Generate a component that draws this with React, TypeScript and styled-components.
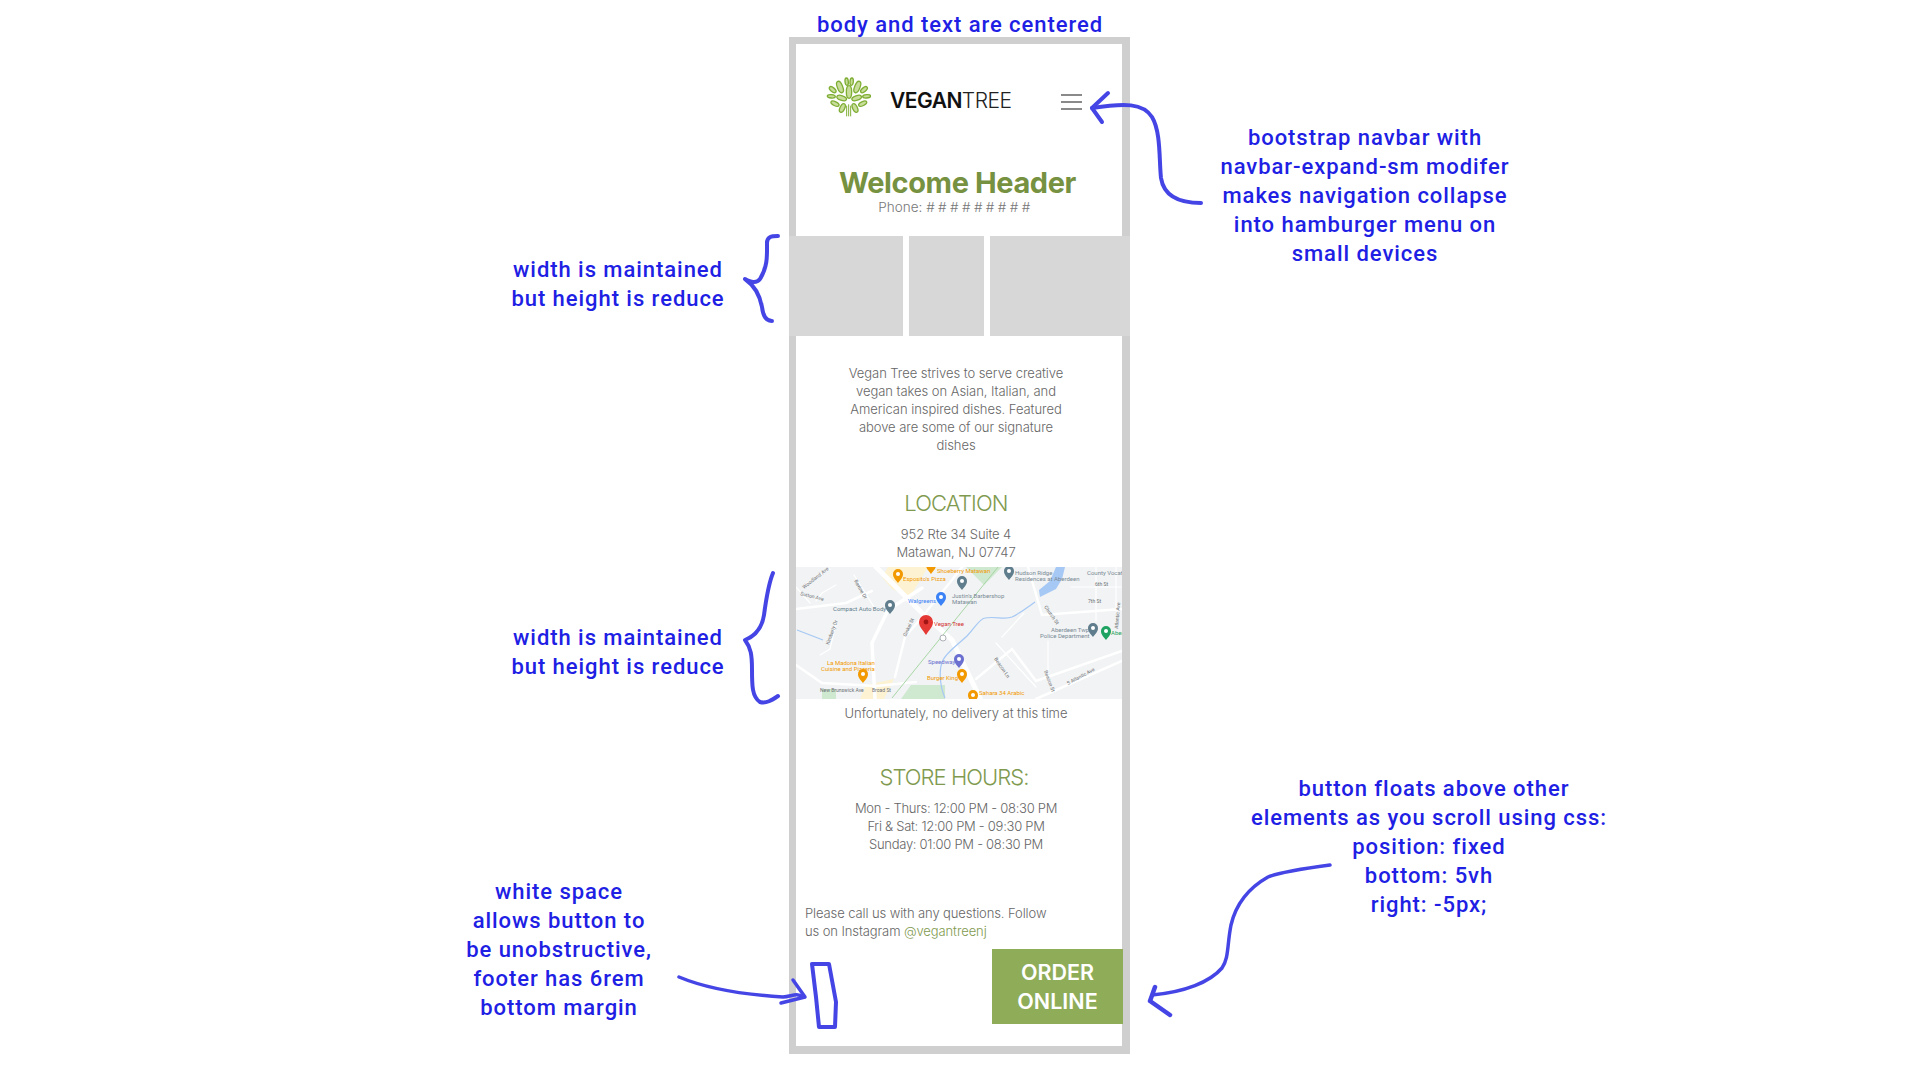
import styled, { createGlobalStyle } from "styled-components";

const GREEN = "#7f9a4f";
const BLUE = "#2020e4";
const INK = "#4545e6";

const GlobalStyle = createGlobalStyle`
  html, body {
    margin: 0;
    padding: 0;
    background: #fff;
  }
  * {
    box-sizing: border-box;
  }
`;

const S = {
  Canvas: styled.div`
    position: relative;
    width: 1920px;
    height: 1080px;
    overflow: hidden;
    padding: 37px 0 0 789px;
    font-family: Inter, "Liberation Sans", sans-serif;
  `,
  Note: styled.div<{ $x: number; $y: number }>`
    position: absolute;
    left: ${({ $x }) => $x}px;
    top: ${({ $y }) => $y}px;
    transform: translateX(-50%);
    white-space: nowrap;
    text-align: center;
    color: ${BLUE};
    font-family: Roboto, "Noto Sans", sans-serif;
    font-size: 22px;
    font-weight: 500;
    line-height: 29px;
    letter-spacing: 0.95px;
  `,
  NoteIndent: styled.span`
    margin-left: 10px;
  `,
  Ink: styled.svg`
    position: absolute;
    left: 0;
    top: 0;
    pointer-events: none;
  `,
  Phone: styled.div`
    position: relative;
    width: 341px;
    height: 1017px;
    background: #fff;
    border: solid #cfcfcf;
    border-width: 7px 8px 8px 7px;
  `,
  Nav: styled.nav`
    height: 106px;
    display: flex;
    align-items: center;
    padding: 0 40px 0 30px;
  `,
  Brand: styled.div`
    display: flex;
    align-items: center;
    gap: 19px;
    flex: 1;
    font-size: 21px;
    letter-spacing: -0.5px;
    font-weight: 300;
    color: #222;
  `,
  BrandName: styled.div`
    margin-top: 6px;
  `,
  BrandStrong: styled.span`
    font-weight: 600;
    color: #111;
  `,
  Burger: styled.button`
    width: 21px;
    height: 16px;
    margin-top: 10px;
    padding: 0;
    border: 0;
    background: none;
    display: flex;
    flex-direction: column;
    justify-content: space-between;

    span {
      display: block;
      height: 2px;
      background: #8a8a8a;
    }
  `,
  Header: styled.header`
    padding: 16px 0 22px;
    text-align: center;
  `,
  Title: styled.h1`
    margin: 0 3px 0 0;
    font-size: 29px;
    line-height: 34px;
    font-weight: 700;
    letter-spacing: -0.4px;
    color: #76913f;
  `,
  Phoneline: styled.div`
    margin-right: 6px;
    font-size: 13.5px;
    line-height: 14px;
    font-weight: 300;
    color: #777;
  `,
  Hashes: styled.span`
    letter-spacing: 3.4px;
    font-weight: 300;
  `,
  Strip: styled.div`
    height: 100px;
    margin: 0 -8px 0 -7px;
    display: grid;
    grid-template-columns: 114px 75px 140px;
    column-gap: 6px;
  `,
  Tile: styled.div`
    background: #d7d7d7;
  `,
  Body: styled.p<{ $top: number; $spacing?: number }>`
    margin: ${({ $top }) => $top}px 6px 0 0;
    text-align: center;
    font-size: 13px;
    line-height: 18px;
    font-weight: 300;
    letter-spacing: ${({ $spacing = -0.05 }) => $spacing}px;
    color: #666;
  `,
  Heading: styled.h2<{ $top: number; $spacing?: number; $shift?: number }>`
    margin: ${({ $top }) => $top}px ${({ $shift = 6 }) => $shift}px 0 0;
    text-align: center;
    font-size: 22px;
    line-height: 30px;
    font-weight: 300;
    letter-spacing: ${({ $spacing = -0.85 }) => $spacing}px;
    color: ${GREEN};
  `,
  Map: styled.svg`
    display: block;
    margin-top: 6px;
  `,
  Footer: styled.p`
    margin: 51px 0 0;
    padding-left: 9px;
    font-size: 13px;
    line-height: 18px;
    font-weight: 300;
    letter-spacing: -0.1px;
    color: #666;
  `,
  Handle: styled.span`
    color: ${GREEN};
  `,
  Order: styled.button`
    position: absolute;
    right: -1px;
    bottom: 22px;
    width: 131px;
    height: 75px;
    border: 0;
    padding: 0;
    background: #8fac58;
    color: #fff;
    font-family: Inter, "Liberation Sans", sans-serif;
    font-size: 21.5px;
    line-height: 29px;
    font-weight: 600;
  `,
};

const leaves = [
  [117, 97, 8, 19, 0],
  [90, 82, 8, 18, -22],
  [142, 82, 8, 18, 22],
  [110, 66, 5, 11, -5],
  [125, 66, 5, 11, 5],
  [68, 90, 6, 12, -50],
  [162, 90, 6, 12, 50],
  [64, 110, 5, 12, -85],
  [170, 110, 5, 12, 85],
  [95, 115, 7, 15, -72],
  [140, 115, 7, 15, 72],
  [75, 132, 6, 13, -65],
  [158, 132, 6, 13, 65],
  [97, 145, 7, 14, 25],
  [135, 145, 7, 14, -25],
];

const Logo = () => (
  <svg width="45" height="40" viewBox="48 52 135 120">
    {leaves.map(([cx, cy, rx, ry, r]) => (
      <ellipse
        key={`${cx}-${cy}`}
        cx={cx}
        cy={cy}
        rx={rx}
        ry={ry}
        transform={`rotate(${r} ${cx} ${cy})`}
        fill="#c9dd9b"
        stroke="#7fae35"
        strokeWidth="4"
      />
    ))}
    <path
      d="M110 170v-32M116 170v-36M122 170v-32"
      stroke="#7fae35"
      strokeWidth="3"
      fill="none"
    />
  </svg>
);

const pins = [
  { x: 102, y: 10, c: "#f29900", label: "Esposito's Pizza", lx: 107, ly: 14 },
  { x: 135, y: 1, c: "#f29900", label: "Shoeberry Matawan", lx: 141, ly: 6 },
  { x: 213, y: 7, c: "#5f7d8c", label: "", lx: 0, ly: 0 },
  { x: 166, y: 17, c: "#5f7d8c", label: "", lx: 0, ly: 0 },
  { x: 145, y: 33, c: "#3b82f6", label: "Walgreens", lx: 112, ly: 36 },
  { x: 94, y: 41, c: "#5f7d8c", label: "Compact Auto Body", lx: 37, ly: 44 },
  { x: 163, y: 95, c: "#6a6fd0", label: "Speedway", lx: 132, ly: 97 },
  { x: 166, y: 110, c: "#f29900", label: "Burger King", lx: 131, ly: 113 },
  { x: 67, y: 110, c: "#f29900", label: "", lx: 0, ly: 0 },
  { x: 177, y: 131, c: "#f29900", label: "Sahara 34 Arabic", lx: 183, ly: 128 },
  { x: 297, y: 64, c: "#5f7d8c", label: "", lx: 0, ly: 0 },
  { x: 310, y: 67, c: "#1ea362", label: "Aber", lx: 315, ly: 68 },
];

const MapPicture = () => (
  <S.Map width="326" height="132" viewBox="0 0 326 132">
    <rect width="326" height="132" fill="#f1f3f4" />
    <path d="M92 0h40l-18 30-18-8-10-12z" fill="#fdf3d3" />
    <path d="M170 0h36l-18 18z" fill="#cfe8d0" />
    <path d="M64 132l6-14 28-6-10 20z" fill="#fdf3d3" />
    <path d="M40 132v-10h-14v10zM105 132l10-14h34v14z" fill="#cfe8d0" />
    <path d="M260 0h9l-3 12-6 10-16 8-1-7 11-9z" fill="#a6c8f5" />
    <g stroke="#fff" fill="none" strokeLinecap="round">
      <path d="M80 0l46 46 30 27 28 58" strokeWidth="5" />
      <path d="M79 132l-3-56 16-33 34-22" strokeWidth="3.5" />
      <path d="M99 110l10-40 17-20 30-37 10-13" strokeWidth="2.5" />
      <path d="M0 98l26 18 54 3 40-4M0 42l50-6 26-12" strokeWidth="2.5" />
      <path d="M232 0l14 48 80-6M180 112l36-30 24 32 86-30M240 132l86-38" strokeWidth="2.5" />
      <path d="M8 18l26-16M20 34l6-8 14-8M58 8l20 32M300 0v54M275 20h50M320 0v44" strokeWidth="1.2" />
      <path d="M252 74v36M40 56l-6 26-10 6M200 76l40 44M0 20l14 16M206 70l22-24" strokeWidth="1.2" />
    </g>
    <path d="M96 131L202 0" stroke="#a9d6a6" strokeWidth="1" fill="none" />
    <path
      d="M1 63l26 10M149 131c-6-14-6-30-2-38 4-8 12-13 24-24 8-8 12-17 18-18 10-2 20 2 27-1 10-5 16-10 23-15"
      stroke="#a6c8f5"
      strokeWidth="1.2"
      fill="none"
    />
    {pins.map((p) => (
      <g key={`${p.x}-${p.y}`}>
        <path
          d={`M${p.x} ${p.y + 6}c-2-3-5-5-5-9a5 5 0 0 1 10 0c0 4-3 6-5 9z`}
          fill={p.c}
        />
        <circle cx={p.x} cy={p.y - 3} r="2" fill="#fff" />
        {p.label && (
          <text x={p.lx} y={p.ly} fontSize="6" fill={p.c} fontFamily="Roboto, sans-serif">
            {p.label}
          </text>
        )}
      </g>
    ))}
    <g fontSize="6" fontFamily="Roboto, sans-serif" fill="#7a8a94">
      <text x="219" y="8">Hudson Ridge</text>
      <text x="219" y="14">Residences at Aberdeen</text>
      <text x="156" y="31">Justin's Barbershop</text>
      <text x="156" y="37">Matawan</text>
      <text x="255" y="65">Aberdeen Twp</text>
      <text x="244" y="71">Police Department</text>
      <text x="291" y="8">County Vocat</text>
    </g>
    <g fontSize="6" fontFamily="Roboto, sans-serif" fill="#f29900">
      <text x="31" y="98">La Madona Italian</text>
      <text x="25" y="104">Cuisine and Pizzeria</text>
    </g>
    <g fontSize="5" fontFamily="Roboto, sans-serif" fill="#6b6f73">
      <text x="24" y="125">New Brunswick Ave</text>
      <text x="76" y="125">Broad St</text>
      <text transform="translate(8 22) rotate(-38)">Woodland Ave</text>
      <text transform="translate(4 28) rotate(14)">Sutton Ave</text>
      <text transform="translate(58 14) rotate(60)">Ravine Dr</text>
      <text transform="translate(110 70) rotate(-65)">Ginkel St</text>
      <text transform="translate(33 78) rotate(-70)">Kimberly Dr</text>
      <text transform="translate(248 40) rotate(55)">Church St</text>
      <text transform="translate(198 92) rotate(55)">Beacon Ln</text>
      <text transform="translate(248 104) rotate(70)">Beacon St</text>
      <text transform="translate(272 118) rotate(-28)">S Atlantic Ave</text>
      <text x="299" y="19">6th St</text>
      <text x="292" y="36">7th St</text>
      <text transform="translate(322 62) rotate(-85)">Atlantic Ave</text>
    </g>
    <path d="M130 68c-3-5-7-8-7-13a7 7 0 0 1 14 0c0 5-4 8-7 13z" fill="#e53935" />
    <circle cx="130" cy="55" r="2.4" fill="#a31515" />
    <text x="138" y="59" fontSize="6" fontFamily="Roboto, sans-serif" fill="#d32f2f">
      Vegan Tree
    </text>
    <circle cx="147" cy="71" r="3" fill="#fff" stroke="#9aa0a6" strokeWidth="0.8" />
  </S.Map>
);

const Strokes = () => (
  <S.Ink width="1920" height="1080" viewBox="0 0 1920 1080" fill="none" stroke={INK} strokeLinecap="round" strokeLinejoin="round">
    <path strokeWidth="4" d="M1201 203C1180 203 1164 197 1161 178C1159 160 1161 132 1152 117C1143 103 1125 103 1092 108" />
    <path strokeWidth="4" d="M1108 93L1092 108L1102 122" />
    <path strokeWidth="4" d="M778 236C771 236 767 237 767 243C767 255 768 266 760 279C756 284 751 282 745 279C755 286 760 296 762 307C763 316 766 321 772 321" />
    <path strokeWidth="4" d="M773 573C768 585 766 600 764 615C762 628 755 636 745 640C751 648 752 655 752 670C752 685 752 697 760 702C766 704 772 700 778 696" />
    <path strokeWidth="4" d="M812 964L829 964L836 1002L835 1027L819 1027L816 997Z" />
    <path strokeWidth="3.5" d="M679 977C710 990 750 995 783 997C791 997 796 992 803 997" />
    <path strokeWidth="3.5" d="M793 980L805 997L781 1003" />
    <path strokeWidth="3.5" d="M1330 865C1300 869 1280 872 1268 877C1245 890 1235 908 1231 925C1227 945 1229 958 1222 968C1210 982 1185 992 1152 995" />
    <path strokeWidth="4.5" d="M1155 987L1150 1001L1170 1015" />
  </S.Ink>
);

const App = () => (
  <>
    <GlobalStyle />
    <S.Canvas>
      <S.Phone>
        <S.Nav>
          <S.Brand>
            <Logo />
            <S.BrandName>
              <S.BrandStrong>VEGAN</S.BrandStrong>TREE
            </S.BrandName>
          </S.Brand>
          <S.Burger>
            <span />
            <span />
            <span />
          </S.Burger>
        </S.Nav>
        <S.Header>
          <S.Title>Welcome Header</S.Title>
          <S.Phoneline>
            Phone: <S.Hashes>#########</S.Hashes>
          </S.Phoneline>
        </S.Header>
        <S.Strip>
          <S.Tile />
          <S.Tile />
          <S.Tile />
        </S.Strip>
        <S.Body $top={28}>
          Vegan Tree strives to serve creative
          <br />
          vegan takes on Asian, Italian, and
          <br />
          American inspired dishes. Featured
          <br />
          above are some of our signature
          <br />
          dishes
        </S.Body>
        <S.Heading $top={34}>LOCATION</S.Heading>
        <S.Body $top={7} $spacing={-0.1}>
          952 Rte 34 Suite 4
          <br />
          Matawan, NJ 07747
        </S.Body>
        <MapPicture />
        <S.Body $top={5}>Unfortunately, no delivery at this time</S.Body>
        <S.Heading $top={40} $spacing={-0.95} $shift={10}>STORE HOURS:</S.Heading>
        <S.Body $top={7} $spacing={-0.28}>
          Mon - Thurs: 12:00 PM - 08:30 PM
          <br />
          Fri &amp; Sat: 12:00 PM - 09:30 PM
          <br />
          Sunday: 01:00 PM - 08:30 PM
        </S.Body>
        <S.Footer>
          Please call us with any questions. Follow
          <br />
          us on Instagram <S.Handle>@vegantreenj</S.Handle>
        </S.Footer>
        <S.Order>
          ORDER
          <br />
          ONLINE
        </S.Order>
      </S.Phone>

      <S.Note $x={960} $y={10}>body and text are centered</S.Note>
      <S.Note $x={618} $y={255}>
        width is maintained
        <br />
        but height is reduce
      </S.Note>
      <S.Note $x={618} $y={623}>
        width is maintained
        <br />
        but height is reduce
      </S.Note>
      <S.Note $x={559} $y={877}>
        white space
        <br />
        allows button to
        <br />
        be unobstructive,
        <br />
        footer has 6rem
        <br />
        bottom margin
      </S.Note>
      <S.Note $x={1365} $y={123}>
        bootstrap navbar with
        <br />
        navbar-expand-sm modifer
        <br />
        makes navigation collapse
        <br />
        into hamburger menu on
        <br />
        small devices
      </S.Note>
      <S.Note $x={1429} $y={774}>
        <S.NoteIndent>button floats above other</S.NoteIndent>
        <br />
        elements as you scroll using css:
        <br />
        position: fixed
        <br />
        bottom: 5vh
        <br />
        right: -5px;
      </S.Note>
      <Strokes />
    </S.Canvas>
  </>
);

export default App;
